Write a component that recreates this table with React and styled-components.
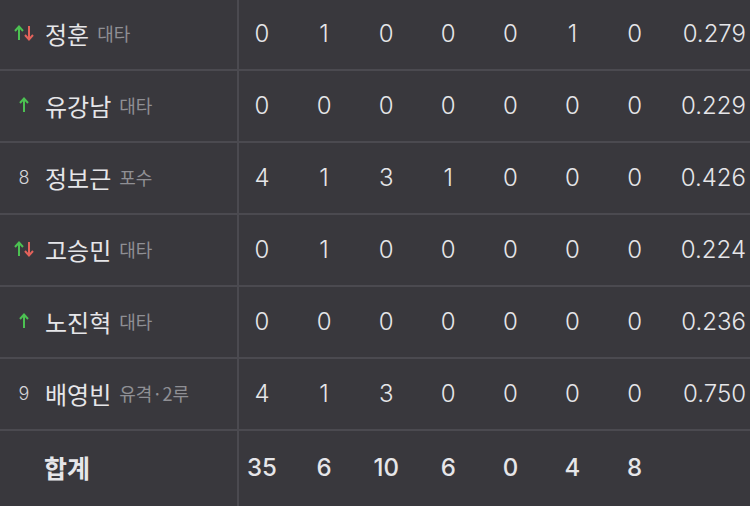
import React from "react";
import styled, { createGlobalStyle } from "styled-components";

const GlobalStyle = createGlobalStyle`
  html, body {
    margin: 0;
    padding: 0;
    background: #39383d;
  }
  body {
    font-family: Inter, "Noto Sans CJK KR", sans-serif;
    overflow: hidden;
  }
`;

const players = [
  { mark: "swap", name: "정훈", pos: "대타", stats: [0, 1, 0, 0, 0, 1, 0], avg: "0.279" },
  { mark: "up", name: "유강남", pos: "대타", stats: [0, 0, 0, 0, 0, 0, 0], avg: "0.229" },
  { mark: "8", name: "정보근", pos: "포수", stats: [4, 1, 3, 1, 0, 0, 0], avg: "0.426" },
  { mark: "swap", name: "고승민", pos: "대타", stats: [0, 1, 0, 0, 0, 0, 0], avg: "0.224" },
  { mark: "up", name: "노진혁", pos: "대타", stats: [0, 0, 0, 0, 0, 0, 0], avg: "0.236" },
  { mark: "9", name: "배영빈", pos: "유격·2루", stats: [4, 1, 3, 0, 0, 0, 0], avg: "0.750" },
];

const totals = [35, 6, 10, 6, 0, 4, 8];

const Arrow = ({ dir, color }) => (
  <svg width="10" height="16" viewBox="0 0 10 16">
    {dir === "up" ? (
      <path d="M5 15V2M1 6l4-4.5L9 6" stroke={color} strokeWidth="2" fill="none" />
    ) : (
      <path d="M5 1v13M1 10l4 4.5L9 10" stroke={color} strokeWidth="2" fill="none" />
    )}
  </svg>
);

const Mark = ({ mark }) => {
  if (mark === "swap")
    return (
      <MarkSlot>
        <Arrow dir="up" color="#4cc152" />
        <Arrow dir="down" color="#e3625b" />
      </MarkSlot>
    );
  if (mark === "up")
    return (
      <MarkSlot>
        <Arrow dir="up" color="#4cc152" />
      </MarkSlot>
    );
  return (
    <MarkSlot>
      <Order>{mark}</Order>
    </MarkSlot>
  );
};

export default function App() {
  return (
    <>
      <GlobalStyle />
      <Table>
        {players.map((p) => (
          <Row key={p.name}>
            <NameCell>
              <Mark mark={p.mark} />
              <Name>{p.name}</Name>
              <Pos>{p.pos}</Pos>
            </NameCell>
            <Stats>
              {p.stats.map((s, i) => (
                <Num key={i}>{s}</Num>
              ))}
              <Avg>{p.avg}</Avg>
            </Stats>
          </Row>
        ))}
        <Row $total>
          <NameCell $total>
            <MarkSlot />
            <TotalLabel>합계</TotalLabel>
          </NameCell>
          <Stats $total>
            {totals.map((s, i) => (
              <Num key={i} $bold>
                {s}
              </Num>
            ))}
            <Avg />
          </Stats>
        </Row>
      </Table>
    </>
  );
}

const Table = styled.div`
  width: 750px;
  margin-top: -1px;
  display: flex;
  flex-direction: column;
`;

const Row = styled.div`
  display: flex;
  box-sizing: border-box;
  height: ${(p) => (p.$total ? "78px" : "72px")};
  border-bottom: ${(p) => (p.$total ? "none" : "2px solid #4b4a50")};
`;

const NameCell = styled.div`
  width: 239px;
  flex-shrink: 0;
  box-sizing: border-box;
  border-right: 2px solid #4b4a50;
  display: flex;
  align-items: center;
  padding-left: 12px;
  padding-bottom: ${(p) => (p.$total ? "6px" : "2px")};
`;

const MarkSlot = styled.div`
  width: 24px;
  display: flex;
  justify-content: center;
  align-items: center;
  margin-right: 9px;
`;

const Order = styled.span`
  font-family: Inter, sans-serif;
  font-size: 18px;
  font-weight: 300;
  color: #d6d6d9;
`;

const Name = styled.span`
  font-family: "Noto Sans CJK KR", sans-serif;
  font-size: 24px;
  color: #e6e6e9;
  margin-right: 8px;
`;

const Pos = styled.span`
  font-family: "Noto Sans CJK KR", sans-serif;
  font-size: 18px;
  color: #8f8f94;
`;

const TotalLabel = styled.span`
  font-family: "Noto Sans CJK KR", sans-serif;
  font-size: 25px;
  font-weight: 700;
  color: #e6e6e9;
  margin-left: -1px;
`;

const Stats = styled.div`
  flex: 1;
  display: grid;
  grid-template-columns: repeat(7, 42px) 1fr;
  column-gap: 20.1px;
  align-items: center;
  padding: 0 4px ${(p) => (p.$total ? "6px" : "2px")} 2px;
`;

const Num = styled.span`
  text-align: center;
  font-family: Inter, sans-serif;
  font-size: 24px;
  font-weight: ${(p) => (p.$bold ? 500 : 300)};
  color: #e6e6e9;
`;

const Avg = styled.span`
  text-align: right;
  font-family: Inter, sans-serif;
  font-size: 24px;
  font-weight: 300;
  color: #e6e6e9;
`;
